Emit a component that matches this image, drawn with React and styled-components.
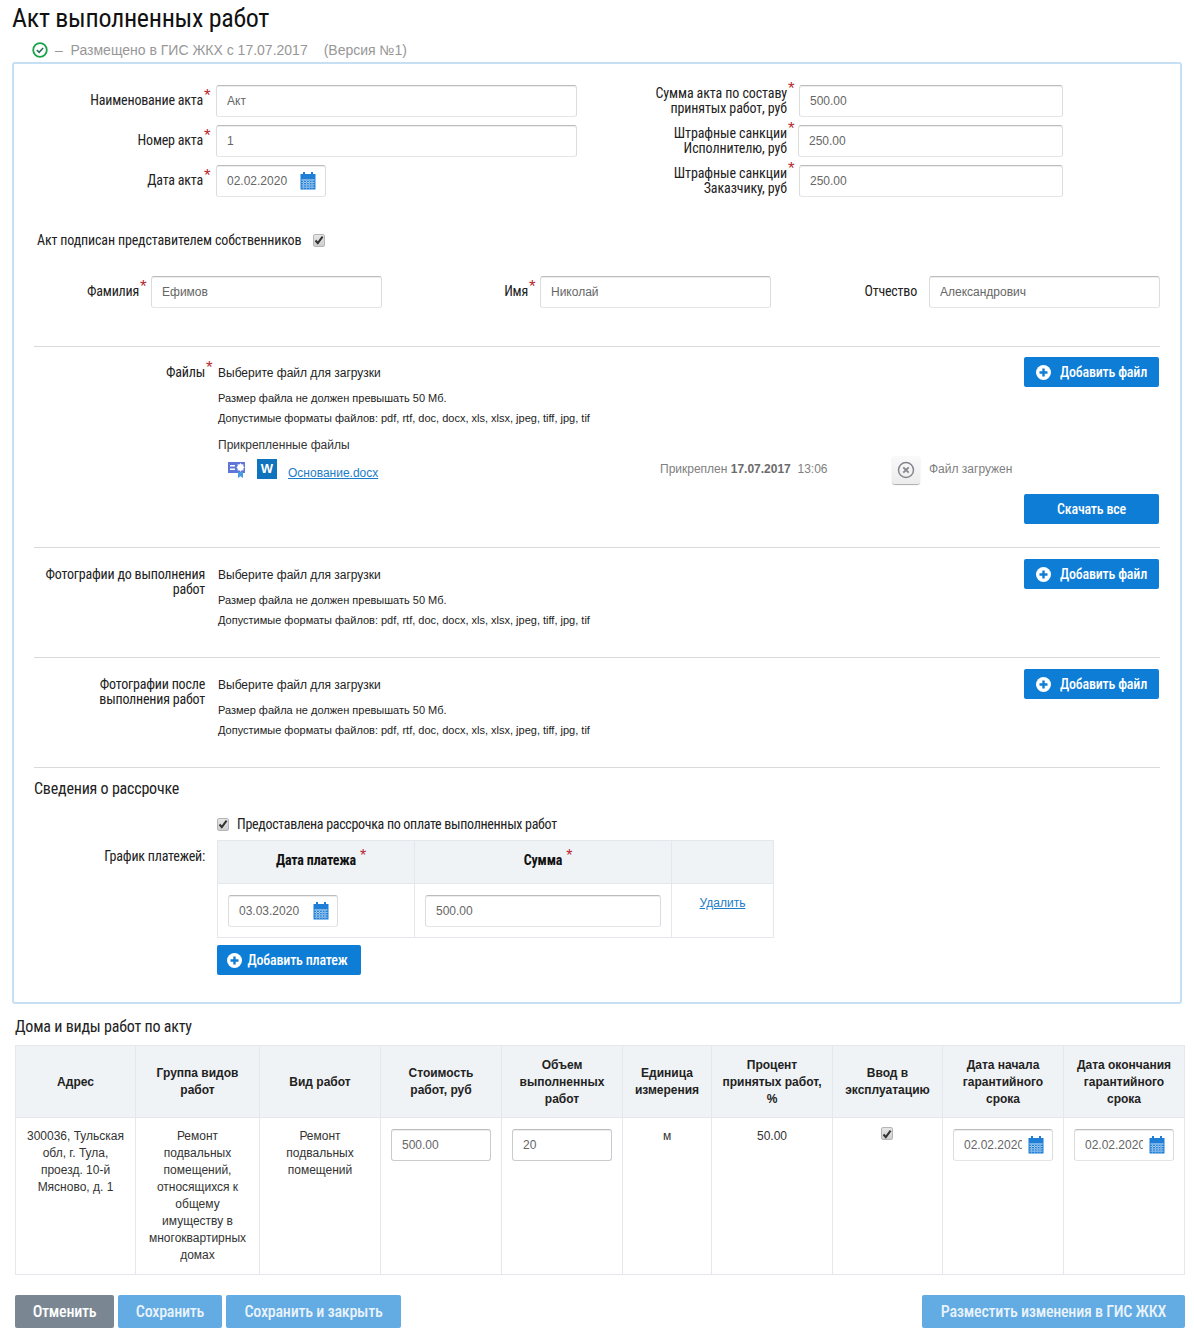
import React from "react";
import styled, { createGlobalStyle } from "styled-components";

const NARROW = `"Roboto Condensed", "Liberation Sans", sans-serif`;
const ARIAL = `"Liberation Sans", Arial, sans-serif`;

const GlobalStyle = createGlobalStyle`
  html, body { margin: 0; padding: 0; background: #fff; }
  body { font-family: ${ARIAL}; font-size: 12px; color: #222; }
  * { box-sizing: border-box; }
`;

const PlusCircle = () => (
  <svg width="15" height="15" viewBox="0 0 15 15">
    <circle cx="7.5" cy="7.5" r="7.5" fill="#fff" />
    <path d="M7.5 3.5v8M3.5 7.5h8" stroke="#0d7dd6" strokeWidth="2.4" />
  </svg>
);

const CalendarIcon = () => (
  <svg width="16" height="18" viewBox="0 0 16 18">
    <path d="M3 0h2v3H3zM11 0h2v3h-2z" fill="#1f7fd6" />
    <rect x="0.5" y="2" width="15" height="15.5" fill="#1f7fd6" />
    <path
      d="M1.5 7.5h13v1h-13zM1.5 10h13v.8h-13zM1.5 12.4h13v.8h-13zM1.5 14.8h13v.8h-13zM3.2 7v9.5h.8V7zM6 7v9.5h.8V7zM8.8 7v9.5h.8V7zM11.6 7v9.5h.8V7z"
      fill="#cfe4f7"
    />
  </svg>
);

const Check = () => (
  <svg width="10" height="10" viewBox="0 0 10 10">
    <path d="M1.5 5.5l2.3 2.6L8.6 1.6" fill="none" stroke="#333" strokeWidth="2" />
  </svg>
);

const CertIcon = () => (
  <svg width="18" height="18" viewBox="0 0 18 18">
    <rect x="0" y="1" width="17" height="11" fill="#5d76d8" />
    <path d="M2 4h5v1.4H2zM2 7.5h5v1.4H2z" fill="#fff" />
    <path d="M12.5 2l1.2 1.5 1.8-.3-.3 1.9 1.4 1.3-1.4 1.3.3 1.9-1.8-.3-1.2 1.5-1.2-1.5-1.8.3.3-1.9L8.4 6.4l1.4-1.3-.3-1.9 1.8.3z" fill="#fff" />
    <path d="M10 11h5v6l-2.5-1.8L10 17z" fill="#4a9be0" />
  </svg>
);

const Page = styled.div`
  width: 1194px;
  height: 1338px;
  overflow: hidden;
`;

const Title = styled.h1`
  margin: 0;
  padding: 3px 0 0 12px;
  height: 39px;
  font: 400 26px/30px ${NARROW};
  letter-spacing: -0.3px;
  color: #111;
`;

const StatusRow = styled.div`
  display: flex;
  align-items: center;
  height: 21px;
  padding-left: 32px;
  font-size: 14px;
  color: #979797;
  svg { margin-right: 7px; }
`;

const Version = styled.span`
  margin-left: 16px;
`;

const Panel = styled.section`
  margin: 2px 12px 0;
  width: 1170px;
  height: 942px;
  border: 2px solid #c5dff5;
  border-radius: 3px;
  padding: 21px 20px 0;
`;

const TopGrid = styled.div`
  display: grid;
  grid-template-columns: 566px 1fr;
`;

const Stack = styled.div`
  display: flex;
  flex-direction: column;
  gap: 8px;
`;

const Field = styled.div`
  display: flex;
  align-items: center;
  gap: 5px;
`;

const Label = styled.div`
  width: ${(p) => p.$w}px;
  flex: none;
  padding-right: ${(p) => p.$pr || 7}px;
  padding-bottom: ${(p) => (p.$up ? 2 : 0)}px;
  text-align: right;
  font: 400 14px/15px ${NARROW};
  letter-spacing: ${(p) => p.$track ?? -0.2}px;
  color: #222;
`;

const Req = styled.span`
  position: relative;
`;

const Star = styled.i`
  position: absolute;
  left: 100%;
  top: -5px;
  margin-left: 1px;
  font: 400 17px/17px ${ARIAL};
  color: #b8262e;
`;

const TextInput = styled.input`
  display: block;
  width: ${(p) => p.$w}px;
  height: 32px;
  padding: 0 10px;
  border: 1px solid ${(p) => (p.$strong ? "#c9cbcd" : "#e3e6e9")};
  border-top-color: #bcbcbc;
  border-left-color: ${(p) => (p.$strong ? "#c9cbcd" : "#dcdcdc")};
  border-right-color: ${(p) => (p.$strong ? "#c9cbcd" : "#dcdcdc")};
  border-radius: 3px;
  background: #fff;
  outline: none;
  box-shadow: inset 0 1px 0 #eee;
  font: 400 12px ${ARIAL};
  color: #666;
`;

const DateBox = styled.div`
  position: relative;
  width: ${(p) => p.$w}px;
  input { width: 100%; padding-right: ${(p) => p.$pad}px; }
  svg { position: absolute; right: ${(p) => p.$right}px; top: 7px; }
`;

const CheckRow = styled.div`
  display: flex;
  align-items: center;
  height: 20px;
  margin-top: ${(p) => p.$top}px;
  margin-left: ${(p) => p.$left || 0}px;
  gap: ${(p) => p.$gap}px;
  font: 400 14px/20px ${NARROW};
  letter-spacing: ${(p) => p.$track}px;
  color: #222;
`;

const CheckBox = styled.span`
  display: inline-flex;
  align-items: center;
  justify-content: center;
  width: 12px;
  height: 13px;
  flex: none;
  border: 1px solid #b5b5b5;
  border-radius: 2px;
  background: linear-gradient(#e6e6e6, #cfcfcf);
`;

const FioRow = styled.div`
  display: flex;
  margin-top: 26px;
`;

const Divider = styled.div`
  border-top: 1px solid #d9d9d9;
`;

const Section = styled(Divider)`
  display: grid;
  grid-template-columns: 171px minmax(0, 1fr) 135px;
  column-gap: 13px;
  margin-top: ${(p) => p.$top || 0}px;
  padding: ${(p) => p.$pt}px 1px ${(p) => p.$pb}px 0;
`;

const SectionLabel = styled.div`
  padding-top: 8px;
  text-align: right;
  font: 400 14px/15px ${NARROW};
  letter-spacing: -0.2px;
  color: #222;
`;

const SectionBody = styled.div`
  padding-top: 9px;
`;

const ChooseText = styled.div`
  font-size: 12px;
  line-height: 15px;
  margin-bottom: 7px;
  color: #222;
`;

const Hint = styled.div`
  font-size: 11px;
  line-height: 20px;
  color: #222;
`;

const AttachedTitle = styled.div`
  margin-top: 9px;
  font-size: 12px;
  line-height: 16px;
  color: #333;
`;

const FileRow = styled.div`
  display: flex;
  align-items: center;
  height: 28px;
  margin-top: 3px;
  padding-left: 10px;
  svg { flex: none; }
`;

const WordBox = styled.span`
  display: flex;
  flex: none;
  align-items: center;
  justify-content: center;
  width: 20px;
  height: 20px;
  margin: 0 0 2px 11px;
  background: #0f74bd;
  color: #fff;
  font: 700 13px/20px ${ARIAL};
`;

const FileLink = styled.a`
  flex: none;
  width: 372px;
  margin-left: 11px;
  padding-top: 6px;
  color: #1d7cc8;
  font-size: 12px;
  text-decoration: underline;
`;

const Muted = styled.span`
  flex: none;
  padding-bottom: 2px;
  font-size: 12px;
  white-space: nowrap;
  color: #808080;
  b { color: #6b6b6b; }
`;

const AttachedAt = styled(Muted)`
  width: 232px;
  white-space: pre;
`;

const CancelIconButton = styled.span`
  display: flex;
  align-items: center;
  justify-content: center;
  flex: none;
  width: 28px;
  height: 28px;
  margin-right: 9px;
  border-radius: 3px;
  background: linear-gradient(#fafafa, #ececec);
  box-shadow: 0 1px 1px #aaa;
`;

const Actions = styled.div`
  display: flex;
  flex-direction: column;
`;

const Button = styled.button`
  display: flex;
  align-items: center;
  justify-content: center;
  gap: ${(p) => p.$gap || 9}px;
  width: ${(p) => (p.$w ? p.$w + "px" : "100%")};
  height: 30px;
  margin-top: ${(p) => p.$top || 0}px;
  padding: 0 ${(p) => p.$right || 0}px 0 0;
  border: 0;
  border-radius: 2px;
  background: #0d7dd6;
  color: #fff;
  font: 500 14px ${NARROW};
  letter-spacing: -0.2px;
`;

const SectionHeading = styled.h3`
  margin: 11px 0 0;
  font: 400 16px/20px ${NARROW};
  letter-spacing: -0.2px;
  color: #222;
`;

const ScheduleRow = styled.div`
  display: flex;
  margin-top: 6px;
`;

const ScheduleLabel = styled.div`
  width: 171px;
  margin-right: 12px;
  padding-top: 9px;
  text-align: right;
  font: 400 14px/15px ${NARROW};
  letter-spacing: -0.2px;
`;

const Table = styled.table`
  border-collapse: collapse;
  table-layout: fixed;
  width: ${(p) => p.$w}px;
  th, td { border: 1px solid #e4e8ec; }
  th { background: #f0f3f6; }
`;

const ScheduleHead = styled.th`
  height: 43px;
  padding: 0 0 4px 10px;
  font: 700 14px ${NARROW};
  letter-spacing: -0.15px;
  color: #111;
`;

const HeadStar = styled.span`
  position: relative;
  top: -4px;
  margin-left: 4px;
  font: 400 16px ${ARIAL};
  color: #b8262e;
`;

const ScheduleCell = styled.td`
  height: 54px;
  padding: 11px 10px 10px;
  vertical-align: top;
  text-align: ${(p) => (p.$center ? "center" : "left")};
`;

const LinkText = styled.a`
  display: inline-block;
  margin-top: 1px;
  color: #1d7cc8;
  font-size: 12px;
  text-decoration: underline;
`;

const Heading = styled.h2`
  margin: 13px 0 0 15px;
  font: 400 16px/20px ${NARROW};
  letter-spacing: -0.2px;
  color: #222;
`;

const WorksWrap = styled.div`
  margin: 8px 0 0 15px;
`;

const WorksHead = styled.th`
  height: 72px;
  padding: 1px 9px 0;
  font: 700 12px/17px ${ARIAL};
  color: #222;
`;

const WorksCell = styled.td`
  height: 157px;
  padding: ${(p) => (p.$input ? "11px 10px" : "10px 8px")};
  vertical-align: top;
  text-align: center;
  font-size: 12px;
  line-height: 17px;
  color: #333;
`;

const CenterCheck = styled.div`
  display: flex;
  justify-content: center;
  margin-top: -1px;
  padding-right: 2px;
`;

const Footer = styled.div`
  display: flex;
  gap: 4px;
  width: 1170px;
  margin: 20px 0 0 15px;
`;

const FootButton = styled.button`
  height: 33px;
  padding: 0;
  width: ${(p) => p.$w}px;
  margin-left: ${(p) => (p.$push ? "auto" : 0)};
  border: 0;
  border-radius: 2px;
  background: ${(p) => (p.$gray ? "#7a8793" : "#62abe3")};
  color: ${(p) => (p.$gray ? "#fff" : "#e9f3fb")};
  font: 500 16px ${NARROW};
  letter-spacing: -0.25px;
`;

const DateField = ({ value, w, right, pad }) => (
  <DateBox $w={w} $right={right} $pad={pad}>
    <TextInput readOnly value={value} />
    <CalendarIcon />
  </DateBox>
);

const Tick = () => (
  <CheckBox>
    <Check />
  </CheckBox>
);

const Required = ({ children }) => (
  <Req>
    {children}
    <Star>*</Star>
  </Req>
);

const UploadHints = () => (
  <>
    <ChooseText>Выберите файл для загрузки</ChooseText>
    <Hint>Размер файла не должен превышать 50 Мб.</Hint>
    <Hint>Допустимые форматы файлов: pdf, rtf, doc, docx, xls, xlsx, jpeg, tiff, jpg, tif</Hint>
  </>
);

const AddFile = () => (
  <Button>
    <PlusCircle />
    Добавить файл
  </Button>
);

const worksHeads = [
  ["Адрес", 120],
  ["Группа видов работ", 124],
  ["Вид работ", 121],
  ["Стоимость работ, руб", 121],
  ["Объем выполненных работ", 121],
  ["Единица измерения", 89],
  ["Процент принятых работ, %", 121],
  ["Ввод в эксплуатацию", 110],
  ["Дата начала гарантийного срока", 121],
  ["Дата окончания гарантийного срока", 121],
];

export default function App() {
  return (
    <Page>
      <GlobalStyle />
      <Title>Акт выполненных работ</Title>
      <StatusRow>
        <svg width="16" height="16" viewBox="0 0 16 16">
          <circle cx="8" cy="8" r="6.8" fill="none" stroke="#1aa34a" strokeWidth="1.8" />
          <path d="M4.8 8l2.3 2.3 4-4.3" fill="none" stroke="#2a6e55" strokeWidth="1.6" />
        </svg>
        <span>–&nbsp; Размещено в ГИС ЖКХ с 17.07.2017</span>
        <Version>(Версия №1)</Version>
      </StatusRow>

      <Panel>
        <TopGrid>
          <Stack>
            <Field>
              <Label $w={177} $pr={8} $up><Required>Наименование акта</Required></Label>
              <TextInput $w={361} readOnly value="Акт" />
            </Field>
            <Field>
              <Label $w={177} $pr={8} $up><Required>Номер акта</Required></Label>
              <TextInput $w={361} readOnly value="1" />
            </Field>
            <Field>
              <Label $w={177} $pr={8} $up><Required>Дата акта</Required></Label>
              <DateField value="02.02.2020" w={110} right={10} pad={30} />
            </Field>
          </Stack>
          <Stack>
            <Field>
              <Label $w={194} $track={-0.1}><Required>Сумма акта по составу</Required><br />принятых работ, руб</Label>
              <TextInput $w={264} readOnly value="500.00" />
            </Field>
            <Field>
              <Label $w={193} $pr={6} $track={-0.1}><Required>Штрафные санкции</Required><br />Исполнителю, руб</Label>
              <TextInput $w={265} readOnly value="250.00" />
            </Field>
            <Field>
              <Label $w={194} $track={-0.1}><Required>Штрафные санкции</Required><br />Заказчику, руб</Label>
              <TextInput $w={264} readOnly value="250.00" />
            </Field>
          </Stack>
        </TopGrid>

        <CheckRow $top={33} $left={3} $gap={12} $track={-0.15}>
          Акт подписан представителем собственников
          <Tick />
        </CheckRow>

        <FioRow>
          <Field>
            <Label $w={112} $up><Required>Фамилия</Required></Label>
            <TextInput $w={231} readOnly value="Ефимов" />
          </Field>
          <Field>
            <Label $w={153} $up><Required>Имя</Required></Label>
            <TextInput $w={231} readOnly value="Николай" />
          </Field>
          <Field>
            <Label $w={153} $up>Отчество</Label>
            <TextInput $w={231} readOnly value="Александрович" />
          </Field>
        </FioRow>

        <Section $top={38} $pt={10} $pb={23}>
          <SectionLabel><Required>Файлы</Required></SectionLabel>
          <SectionBody>
            <UploadHints />
            <AttachedTitle>Прикрепленные файлы</AttachedTitle>
            <FileRow>
              <CertIcon />
              <WordBox>W</WordBox>
              <FileLink href="#">Основание.docx</FileLink>
              <AttachedAt>Прикреплен <b>17.07.2017</b>  13:06</AttachedAt>
              <CancelIconButton>
                <svg width="18" height="18" viewBox="0 0 18 18">
                  <circle cx="9" cy="9" r="7.5" fill="none" stroke="#85858f" strokeWidth="1.5" />
                  <path d="M6.3 6.3l5.4 5.4M11.7 6.3l-5.4 5.4" stroke="#85858f" strokeWidth="1.8" />
                </svg>
              </CancelIconButton>
              <Muted>Файл загружен</Muted>
            </FileRow>
          </SectionBody>
          <Actions>
            <AddFile />
            <Button $top={107}>Скачать все</Button>
          </Actions>
        </Section>

        <Section $pt={11} $pb={27}>
          <SectionLabel>Фотографии до выполнения работ</SectionLabel>
          <SectionBody><UploadHints /></SectionBody>
          <Actions><AddFile /></Actions>
        </Section>

        <Section $pt={11} $pb={27}>
          <SectionLabel>Фотографии после выполнения работ</SectionLabel>
          <SectionBody><UploadHints /></SectionBody>
          <Actions><AddFile /></Actions>
        </Section>

        <Divider />
        <SectionHeading>Сведения о рассрочке</SectionHeading>

        <CheckRow $top={15} $left={183} $gap={8} $track={-0.31}>
          <Tick />
          Предоставлена рассрочка по оплате выполненных работ
        </CheckRow>

        <ScheduleRow>
          <ScheduleLabel>График платежей:</ScheduleLabel>
          <div>
            <Table $w={556}>
              <colgroup>
                <col width="197" />
                <col width="257" />
                <col width="102" />
              </colgroup>
              <thead>
                <tr>
                  <ScheduleHead>Дата платежа<HeadStar>*</HeadStar></ScheduleHead>
                  <ScheduleHead>Сумма<HeadStar>*</HeadStar></ScheduleHead>
                  <ScheduleHead />
                </tr>
              </thead>
              <tbody>
                <tr>
                  <ScheduleCell><DateField value="03.03.2020" w={110} right={9} pad={30} /></ScheduleCell>
                  <ScheduleCell><TextInput $w={236} readOnly value="500.00" /></ScheduleCell>
                  <ScheduleCell $center><LinkText href="#">Удалить</LinkText></ScheduleCell>
                </tr>
              </tbody>
            </Table>
            <Button $w={144} $top={7} $gap={6} $right={4}>
              <PlusCircle />
              Добавить платеж
            </Button>
          </div>
        </ScheduleRow>
      </Panel>

      <Heading>Дома и виды работ по акту</Heading>
      <WorksWrap>
        <Table $w={1169}>
          <colgroup>
            {worksHeads.map(([name, w]) => <col key={name} width={w} />)}
          </colgroup>
          <thead>
            <tr>
              {worksHeads.map(([name]) => <WorksHead key={name}>{name}</WorksHead>)}
            </tr>
          </thead>
          <tbody>
            <tr>
              <WorksCell>300036, Тульская обл, г. Тула, проезд. 10-й Мясново, д. 1</WorksCell>
              <WorksCell>Ремонт подвальных помещений, относящихся к общему имуществу в многоквартирных домах</WorksCell>
              <WorksCell>Ремонт подвальных помещений</WorksCell>
              <WorksCell $input><TextInput $w={100} $strong readOnly value="500.00" /></WorksCell>
              <WorksCell $input><TextInput $w={100} $strong readOnly value="20" /></WorksCell>
              <WorksCell>м</WorksCell>
              <WorksCell>50.00</WorksCell>
              <WorksCell><CenterCheck><Tick /></CenterCheck></WorksCell>
              <WorksCell $input><DateField value="02.02.2020" w={100} right={9} pad={30} /></WorksCell>
              <WorksCell $input><DateField value="02.02.2020" w={100} right={9} pad={30} /></WorksCell>
            </tr>
          </tbody>
        </Table>
      </WorksWrap>

      <Footer>
        <FootButton $gray $w={99}>Отменить</FootButton>
        <FootButton $w={104}>Сохранить</FootButton>
        <FootButton $w={175}>Сохранить и закрыть</FootButton>
        <FootButton $push $w={263}>Разместить изменения в ГИС ЖКХ</FootButton>
      </Footer>
    </Page>
  );
}
